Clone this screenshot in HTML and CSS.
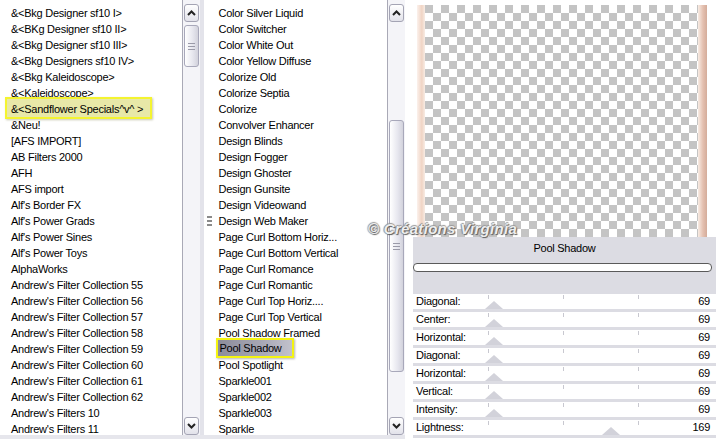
FILE: index.html
```html
<!DOCTYPE html>
<html lang="en">

<head>
     <meta charset="UTF-8">
     <title>Pool Shadow</title>
     <link rel="stylesheet" href="styles.css">
</head>

<body>
     <div class="window">
          <div class="browser">
               <div class="list categories">
                    <ul>
                         <li>&amp;&lt;Bkg Designer sf10 I&gt;</li>
                         <li>&amp;&lt;BKg Designer sf10 II&gt;</li>
                         <li>&amp;&lt;Bkg Designer sf10 III&gt;</li>
                         <li>&amp;&lt;Bkg Designers sf10 IV&gt;</li>
                         <li>&amp;&lt;Bkg Kaleidoscope&gt;</li>
                         <li>&amp;&lt;Kaleidoscope&gt;</li>
                         <li class="picked"><span class="mark"></span><span class="txt">&amp;&lt;Sandflower Specials^v^ &gt;</span></li>
                         <li>&amp;Neu!</li>
                         <li>[AFS IMPORT]</li>
                         <li>AB Filters 2000</li>
                         <li>AFH</li>
                         <li>AFS import</li>
                         <li>Alf's Border FX</li>
                         <li>Alf's Power Grads</li>
                         <li>Alf's Power Sines</li>
                         <li>Alf's Power Toys</li>
                         <li>AlphaWorks</li>
                         <li>Andrew's Filter Collection 55</li>
                         <li>Andrew's Filter Collection 56</li>
                         <li>Andrew's Filter Collection 57</li>
                         <li>Andrew's Filter Collection 58</li>
                         <li>Andrew's Filter Collection 59</li>
                         <li>Andrew's Filter Collection 60</li>
                         <li>Andrew's Filter Collection 61</li>
                         <li>Andrew's Filter Collection 62</li>
                         <li>Andrew's Filters 10</li>
                         <li>Andrew's Filters 11</li>
                    </ul>
               </div>
               <div class="scrollbar">
                    <div class="btn"><svg width="9" height="6" viewBox="0 0 9 6"><polyline points="1,5 4.5,1.5 8,5" fill="none" stroke="#222" stroke-width="2"/></svg></div>
                    <div class="track">
                         <div class="thumb short"><span class="grip"></span></div>
                    </div>
                    <div class="btn"><svg width="9" height="6" viewBox="0 0 9 6"><polyline points="1,1 4.5,4.5 8,1" fill="none" stroke="#222" stroke-width="2"/></svg></div>
               </div>
               <div class="gutter"></div>
               <div class="list filters">
                    <ul>
                         <li>Color Silver Liquid</li>
                         <li>Color Switcher</li>
                         <li>Color White Out</li>
                         <li>Color Yellow Diffuse</li>
                         <li>Colorize Old</li>
                         <li>Colorize Septia</li>
                         <li>Colorize</li>
                         <li>Convolver Enhancer</li>
                         <li>Design Blinds</li>
                         <li>Design Fogger</li>
                         <li>Design Ghoster</li>
                         <li>Design Gunsite</li>
                         <li>Design Videowand</li>
                         <li><span class="drag"></span>Design Web Maker</li>
                         <li>Page Curl Bottom Horiz...</li>
                         <li>Page Curl Bottom Vertical</li>
                         <li>Page Curl Romance</li>
                         <li>Page Curl Romantic</li>
                         <li>Page Curl Top Horiz....</li>
                         <li>Page Curl Top Vertical</li>
                         <li>Pool Shadow Framed</li>
                         <li class="current"><span class="sel">Pool Shadow</span></li>
                         <li>Pool Spotlight</li>
                         <li>Sparkle001</li>
                         <li>Sparkle002</li>
                         <li>Sparkle003</li>
                         <li>Sparkle</li>
                    </ul>
               </div>
               <div class="scrollbar">
                    <div class="btn"><svg width="9" height="6" viewBox="0 0 9 6"><polyline points="1,5 4.5,1.5 8,5" fill="none" stroke="#222" stroke-width="2"/></svg></div>
                    <div class="track">
                         <div class="thumb long"><span class="grip"></span></div>
                    </div>
                    <div class="btn"><svg width="9" height="6" viewBox="0 0 9 6"><polyline points="1,1 4.5,4.5 8,1" fill="none" stroke="#222" stroke-width="2"/></svg></div>
               </div>
          </div>

          <div class="side">
               <div class="preview">
                    <div class="frame">
                         <div class="edge left"></div>
                         <div class="checker"></div>
                         <div class="edge right"></div>
                    </div>
               </div>
               <div class="panel">
                    <div class="title">Pool Shadow</div>
                    <div class="progress"></div>
               </div>
               <div class="sliders">
                    <div class="row"><span>Diagonal:</span><span>69</span><i class="knob" style="left: 72px"></i></div>
                    <div class="row"><span>Center:</span><span>69</span><i class="knob" style="left: 72px"></i></div>
                    <div class="row"><span>Horizontal:</span><span>69</span><i class="knob" style="left: 72px"></i></div>
                    <div class="row"><span>Diagonal:</span><span>69</span><i class="knob" style="left: 72px"></i></div>
                    <div class="row"><span>Horizontal:</span><span>69</span><i class="knob" style="left: 72px"></i></div>
                    <div class="row"><span>Vertical:</span><span>69</span><i class="knob" style="left: 72px"></i></div>
                    <div class="row"><span>Intensity:</span><span>69</span><i class="knob" style="left: 72px"></i></div>
                    <div class="row"><span>Lightness:</span><span>169</span><i class="knob" style="left: 189px"></i></div>
               </div>
          </div>

          <div class="watermark">&copy; Cr&eacute;ations Virginia</div>
     </div>
</body>

</html>
```

FILE: styles.css
```css
body {
     margin: 0;
     background: #ffffff;
}

.window {
     position: relative;
     display: flex;
     width: 716px;
     height: 439px;
     overflow: hidden;
     background: #ffffff;
     font-family: 'Liberation Sans', Arial, sans-serif;
     font-size: 11px;
     letter-spacing: -0.25px;
     color: #000000;
}

/* lists on the left */

.browser {
     display: flex;
     width: 405px;
     height: 435px;
     border-bottom: 4px solid #e6e6ec;
}

.list {
     background: #ffffff;
     overflow: hidden;
}

.list ul {
     margin: 0;
     padding: 5px 0 0 0;
     list-style: none;
}

.list li {
     position: relative;
     height: 16px;
     line-height: 16px;
     white-space: nowrap;
}

.categories {
     width: 183px;
}

.categories li {
     padding-left: 11px;
}

.filters {
     width: 184px;
}

.filters li {
     padding-left: 14px;
}

.gutter {
     width: 5px;
     background: #e3e3ea;
}

.picked .mark {
     position: absolute;
     left: 5px;
     top: -4px;
     width: 143px;
     height: 18px;
     border: 2px solid #f4f430;
     background: #e8e8a8;
     box-shadow: 1px 1px 2px rgba(120, 120, 60, 0.4);
}

.picked .txt {
     position: relative;
}

.current .sel {
     display: inline-block;
     margin-left: -2px;
     padding: 0 2px 0 1px;
     width: 71px;
     height: 16px;
     line-height: 16px;
     border: 2px solid #f4f410;
     margin-top: -3px;
     background: linear-gradient(to right, #8c8c9a, #a8a8b6 60%, #c2c2cc);
     box-shadow: 1px 1px 2px rgba(80, 80, 60, 0.4);
     vertical-align: top;
}

.drag {
     display: inline-block;
     width: 5px;
     height: 10px;
     margin-left: -11px;
     margin-right: 6px;
     vertical-align: -1px;
     background: repeating-linear-gradient(#8a8a8a 0 2px, transparent 2px 4px);
}

/* scrollbars */

.scrollbar {
     display: flex;
     flex-direction: column;
     width: 16px;
     padding: 4px 0 0 1px;
     background: #f4f4f8;
     border-left: 1px solid #a9a9b6;
}

.btn {
     display: flex;
     align-items: center;
     justify-content: center;
     width: 13px;
     height: 16px;
     border: 1px solid #a4a4b4;
     border-radius: 3px;
     background: linear-gradient(#ffffff, #e2e2ea);
}

.track {
     flex: 1;
     position: relative;
}

.thumb {
     position: absolute;
     left: 0;
     width: 13px;
     border: 1px solid #a8a8ba;
     border-radius: 3px;
     background: linear-gradient(to right, #ffffff, #e6e6ee 60%, #d2d2dc);
     display: flex;
     align-items: center;
     justify-content: center;
}

.thumb.short {
     top: 3px;
     height: 40px;
}

.thumb.long {
     top: 98px;
     height: 250px;
}

.grip {
     width: 7px;
     height: 7px;
     background: repeating-linear-gradient(#9a9aa8 0 1px, transparent 1px 3px);
}

/* preview and settings */

.side {
     width: 303px;
     padding-left: 8px;
}

.preview {
     height: 237px;
     padding: 5px 0 0 4px;
     box-sizing: border-box;
}

.frame {
     display: flex;
     width: 290px;
     height: 232px;
}

.edge {
     width: 8px;
}

.edge.left {
     background: linear-gradient(to right, #fbf1ec, #f0d4c4 60%, #f8ece4);
}

.edge.right {
     width: 9px;
     background: linear-gradient(to right, #f8ece4, #e4c0b0 55%, #d4ac9a);
}

.checker {
     flex: 1;
     background: repeating-conic-gradient(#ffffff 0 25%, #c4c4c4 0 50%) 0 0 / 16px 16px;
}

.panel {
     height: 57px;
     background: #dcdce3;
     padding-top: 4px;
     box-sizing: border-box;
}

.title {
     text-align: center;
     line-height: 14px;
}

.progress {
     margin-top: 8px;
     width: 297px;
     height: 7px;
     border: 1px solid #5a5a5a;
     border-radius: 4px;
     background: #ffffff;
}

.row {
     position: relative;
     display: flex;
     justify-content: space-between;
     height: 15px;
     line-height: 15px;
     padding: 0 6px 0 3px;
     border-bottom: 3px solid #dcdce3;
     background-color: #ffffff;
     background-image: linear-gradient(#c8c8d0, #c8c8d0), linear-gradient(#c8c8d0, #c8c8d0), linear-gradient(#c8c8d0, #c8c8d0);
     background-size: 1px 4px;
     background-position: 75px 1px, 150px 1px, 225px 1px;
     background-repeat: no-repeat;
}

.knob {
     position: absolute;
     bottom: 0;
     width: 0;
     height: 0;
     border-left: 9px solid transparent;
     border-right: 9px solid transparent;
     border-bottom: 8px solid #d2d2da;
}

.watermark {
     position: absolute;
     left: 368px;
     top: 220px;
     font-family: 'Liberation Sans', Arial, sans-serif;
     font-size: 15px;
     font-weight: bold;
     font-style: italic;
     letter-spacing: 0.3px;
     color: #eeeeee;
     text-shadow: 1px 1px 1px #5a5a5a, -1px 0 1px #8a8a8a, 0 -1px 1px #9a9a9a;
}
```
